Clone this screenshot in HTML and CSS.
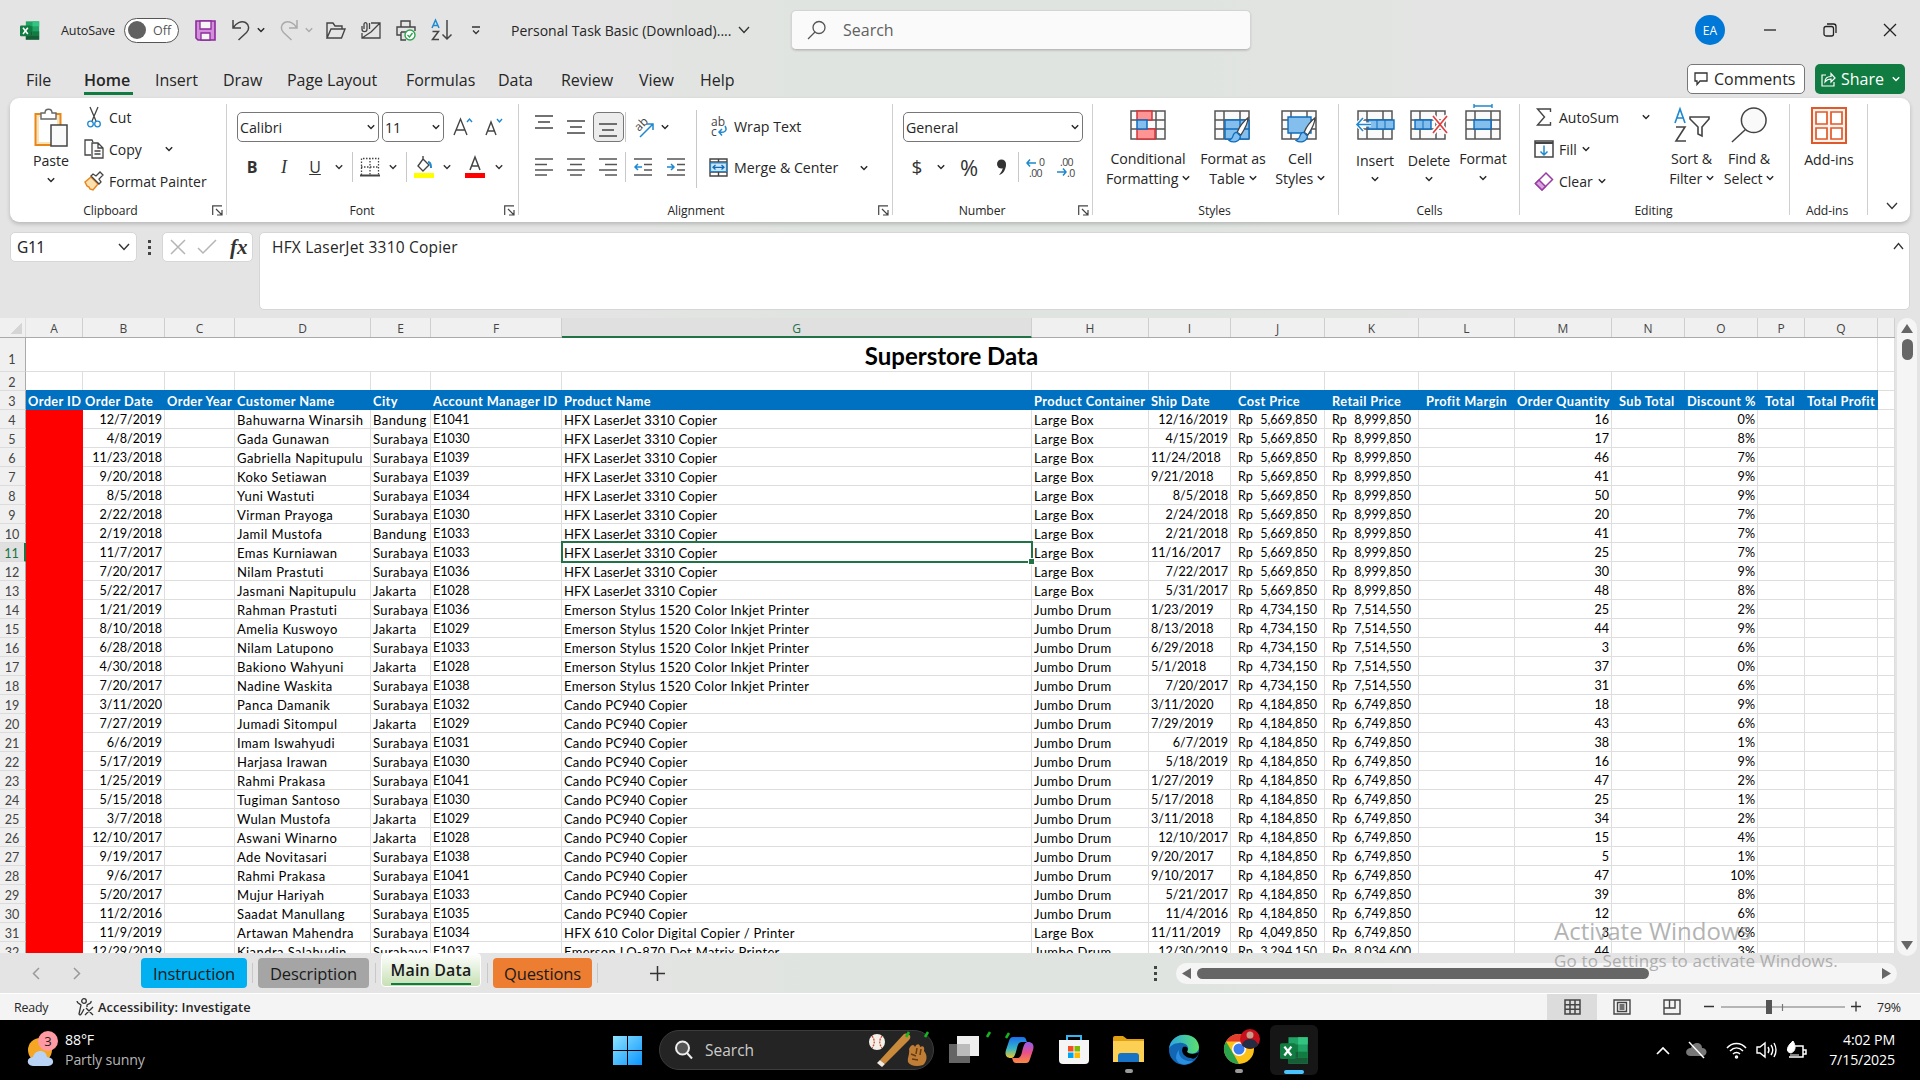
FILE: index.html
```html
<!DOCTYPE html>
<html lang="en">
<head>
<meta charset="utf-8">
<title>Personal Task Basic (Download) - Excel</title>
<link rel="stylesheet" href="styles.css">
</head>
<body>
<svg class="defs" width="0" height="0">
  <symbol id="chev" viewBox="0 0 8 6"><path d="M.8 1.2 4 4.5 7.2 1.2" fill="none" stroke="currentColor" stroke-width="1.4"/></symbol>
  <symbol id="launch" viewBox="0 0 11 11"><path d="M.7 10V.8H10M4 4l6 6M10 5v5H5" fill="none" stroke="#444" stroke-width="1.2"/></symbol>
  <symbol id="excel" viewBox="0 0 24 24"><path d="M7 1h16v22H7z" fill="#21a366"/><path d="M15 1h8v6h-8z" fill="#33c481"/><path d="M7 7h8v6H7z" fill="#107c41"/><path d="M7 13h8v5H7z" fill="#185c37"/><path d="M15 13h8v5h-8z" fill="#107c41"/><path d="M7 18h16v5H7z" fill="#185c37"/><rect y="6" width="13" height="13" rx="1.3" fill="#107c41"/><path d="m3.6 8.8 5.8 7.4m0-7.4-5.8 7.4" stroke="#fff" stroke-width="1.9"/></symbol>
  <symbol id="gridicon" viewBox="0 0 36 30"><path d="M1 1h34v28H1zM1 10h34M1 19h34M10 1v28M26 1v28" fill="#fafafa" stroke="#555" stroke-width="1.5"/></symbol>
  <symbol id="brush" viewBox="0 0 24 32"><path d="M22 2c-5 4-10 11-12 16l4 3c4-6 8-13 8-19z" fill="#fff" stroke="#444" stroke-width="1.4"/><path d="M9.500 18c-3 0-4 3-4.500 5-.5 2-2 3-4 4 4 3 12 2 12.500-5z" fill="#83beec" stroke="#0f6cbd" stroke-width="1.4"/></symbol>
</svg>

<header class="titlebar">
  <svg width="20" height="21"><use href="#excel"/></svg>
  <span class="autosave">AutoSave</span>
  <span class="toggle"><i></i>Off</span>
  <svg width="21" height="21" viewBox="0 0 21 21"><path d="M1 1h19v19H3l-2-2z" fill="#d48fdc" stroke="#8a2b9a" stroke-width="1.6"/><path d="M5 1h11v8H5z" fill="#f6f6f6" stroke="#8a2b9a" stroke-width="1.3"/><path d="M6 13h9v7H6z" fill="#f6f6f6" stroke="#8a2b9a" stroke-width="1.3"/></svg>
  <svg width="20" height="21" viewBox="0 0 20 21" fill="none" stroke="#444" stroke-width="1.5"><path d="M2 0v8h8M2 8C5 3 10 .5 14.500 2.500c4 2.500 4 7 1 10L7.500 20"/></svg>
  <svg width="8" height="6"><use href="#chev"/></svg>
  <svg class="faded" width="20" height="21" viewBox="0 0 20 21" fill="none" stroke="#aaa" stroke-width="1.5"><path d="M18 0v8h-8M18 8C15 3 10 .5 5.500 2.500c-4 2.500-4 7-1 10L12.500 20"/></svg>
  <svg class="faded" width="8" height="6"><use href="#chev"/></svg>
  <svg width="20" height="17" viewBox="0 0 20 17" fill="none" stroke="#444" stroke-width="1.4"><path d="M1 16V1h6l2 3h7v3M1 16 5 7h14l-3.500 9z"/></svg>
  <svg width="20" height="17" viewBox="0 0 20 17" fill="none" stroke="#444" stroke-width="1.300"><path d="M10 1h9v15H1v-5M10 10l9-9M1 16l9-6M1 4v3c0 3.500 5 3.500 5 0V2.500c0-2.500-3-2.500-3 0V7M8.500 1v6"/></svg>
  <svg width="20" height="21" viewBox="0 0 20 21" fill="none" stroke="#444" stroke-width="1.400"><path d="M5 7V1h9v6M5 15H1V7h18v4M5 12v8h5M5 12h6"/><circle cx="14" cy="15" r="5" fill="#fff" stroke="#2da44e"/><path d="m11.500 15 2 2 3-4" stroke="#2da44e"/></svg>
  <svg width="21" height="22" viewBox="0 0 21 22" fill="none" stroke-width="1.500"><path d="m1 9 3.500-8L8 9M2 6.500h5" stroke="#1e88d0"/><path d="M1.500 12.500h6l-6 8h6.500M16 1v19m-4.500-4.500L16 20l4.500-4.500" stroke="#444"/></svg>
  <svg width="10" height="9" viewBox="0 0 10 9" fill="none" stroke="#333" stroke-width="1.300"><path d="M1 1h8M2 4.500l3 3 3-3"/></svg>
  <span class="docname">Personal Task Basic (Download)....</span>
  <svg width="12" height="8" viewBox="0 0 12 8"><path d="m1 1 5 5.500L11 1" fill="none" stroke="#333" stroke-width="1.300"/></svg>
  <div class="search"><svg width="20" height="20" viewBox="0 0 20 20" fill="none" stroke="#555" stroke-width="1.300"><circle cx="12" cy="7.500" r="6"/><path d="m8 12-7 7"/></svg><span>Search</span></div>
  <span class="avatar">EA</span>
  <svg width="14" height="14" viewBox="0 0 14 14"><path d="M1 7h12" stroke="#222" stroke-width="1.300"/></svg>
  <svg width="14" height="14" viewBox="0 0 14 14" fill="none" stroke="#222" stroke-width="1.300"><rect x="1" y="3.500" width="9.500" height="9.500" rx="2"/><path d="M4 1h6.500Q13 1 13 3.500V10"/></svg>
  <svg width="14" height="14" viewBox="0 0 14 14"><path d="m1 1 12 12M13 1 1 13" stroke="#222" stroke-width="1.300"/></svg>
</header>

<nav class="menubar">
  <span>File</span><span class="active">Home</span><span>Insert</span><span>Draw</span><span>Page Layout</span><span>Formulas</span><span>Data</span><span>Review</span><span>View</span><span>Help</span>
  <div class="btn comments"><svg width="14" height="14" viewBox="0 0 14 14"><path d="M1 1h12v8H6l-3 3.500V9H1z" fill="none" stroke="#333" stroke-width="1.300"/></svg>Comments</div>
  <div class="btn share"><svg width="15" height="15" viewBox="0 0 15 15"><path d="M5 3H1v11h12v-4M4 10c0-4 3-5.500 6-5.500V1.500L14 6l-4 4V7C7 7 5.500 8 4 10z" fill="none" stroke="#fff" stroke-width="1.200"/></svg><span>Share</span><svg width="8" height="6"><use href="#chev"/></svg></div>
</nav>

<section class="ribbon">
  <div class="group g-clip">
    <div class="body">
      <div class="big paste"><svg width="35" height="40" viewBox="0 0 35 40"><path d="M1.500 6h25v31h-25z" fill="#fbe3b8" stroke="#e8861a" stroke-width="2"/><path d="M5 9h18v25H5z" fill="#fff"/><path d="M7 5h4c0-5 7-5 7 0h4v6H7z" fill="#fff" stroke="#666" stroke-width="1.400"/><path d="M17 17h16v21H17z" fill="#fafafa" stroke="#444" stroke-width="1.500"/></svg><span>Paste</span><svg width="8" height="6"><use href="#chev"/></svg></div>
      <div class="stack">
        <div><svg width="16" height="21" viewBox="0 0 16 21" fill="none" stroke="#444" stroke-width="1.300"><path d="M4 0l6 14M12 0 6 14"/><circle cx="4.500" cy="17" r="2.800" stroke="#1e88d0"/><circle cx="11.500" cy="17" r="2.800" stroke="#1e88d0"/></svg><span>Cut</span></div>
        <div><svg width="20" height="20" viewBox="0 0 20 20" fill="#fff" stroke="#444" stroke-width="1.300"><path d="M7 16H1V1h7l1 2"/><path d="M8 4h6l5 5v10H8zM14 4v5h5M10.500 12h6M10.500 15h6" fill="#fafafa"/></svg><span>Copy</span><svg class="gap" width="8" height="6"><use href="#chev"/></svg></div>
        <div><svg width="20" height="20" viewBox="0 0 20 20"><path d="m1 11 6-5 7 7-5 6-3-1-1-2-2-1z" fill="#fce0b0" stroke="#e8861a" stroke-width="1.500"/><path d="m7 5 2-2 3 2 4-4 3 3-4 4 2 3-2 2z" fill="#fff" stroke="#444" stroke-width="1.300"/></svg><span>Format Painter</span></div>
      </div>
    </div>
    <div class="label"><span>Clipboard</span><svg width="11" height="11"><use href="#launch"/></svg></div>
  </div>

  <div class="group g-font">
    <div class="body rows">
      <div class="r1"><div class="combo"><span>Calibri</span><svg width="8" height="6"><use href="#chev"/></svg></div><div class="combo"><span>11</span><svg width="8" height="6"><use href="#chev"/></svg></div>
        <svg width="20" height="20" viewBox="0 0 20 20" fill="none" stroke-width="1.400"><path d="M1 18 7.500 2 14 18M3 13h9" stroke="#444"/><path d="m14 5 2.500-3L19 5" stroke="#1e88d0"/></svg>
        <svg width="18" height="20" viewBox="0 0 18 20" fill="none" stroke-width="1.400"><path d="M1 18 6 5l5 13M2.500 14h7" stroke="#444"/><path d="m12 2 2.500 3L17 2" stroke="#1e88d0"/></svg></div>
      <div class="r2"><b>B</b><i>I</i><u>U</u><svg width="8" height="6"><use href="#chev"/></svg><hr>
        <svg width="20" height="20" viewBox="0 0 20 20" fill="none" stroke="#444"><path d="M1.500 18V1.500h17V18M10 1v17M1 10h18" stroke-dasharray="1.500 1.500" stroke-width="1.300"/><path d="M0 18.500h20" stroke-width="2"/></svg><svg width="8" height="6"><use href="#chev"/></svg><hr>
        <svg width="20" height="22" viewBox="0 0 20 22"><path d="m9 3 6 6-6 6-5-5zM9 3V0" fill="none" stroke="#444" stroke-width="1.400"/><path d="M14 6c3 0 3 3 3 6" fill="none" stroke="#1e88d0" stroke-width="2"/><path d="M0 17h20v5H0z" fill="#ff0"/></svg><svg width="8" height="6"><use href="#chev"/></svg>
        <svg width="20" height="22" viewBox="0 0 20 22"><path d="M5 14 10 1l5 13M6.500 10h7" fill="none" stroke="#444" stroke-width="1.500"/><path d="M0 17h20v5H0z" fill="red"/></svg><svg width="8" height="6"><use href="#chev"/></svg></div>
    </div>
    <div class="label"><span>Font</span><svg width="11" height="11"><use href="#launch"/></svg></div>
  </div>

  <div class="group g-align">
    <div class="body">
      <div class="rows">
      <div class="r1">
        <svg class="up" width="18" height="16" viewBox="0 0 18 16"><path d="M0 2h18M3 8h12M0 14h18" stroke="#444" stroke-width="1.500"/></svg>
        <svg width="18" height="16" viewBox="0 0 18 16"><path d="M0 2h18M3 8h12M0 14h18" stroke="#444" stroke-width="1.500"/></svg>
        <span class="pressed"><svg width="18" height="16" viewBox="0 0 18 16"><path d="M0 2h18M3 8h12M0 14h18" stroke="#444" stroke-width="1.500"/></svg></span><hr>
        <svg width="21" height="21" viewBox="0 0 21 21"><text class="abtext" transform="translate(6 15) rotate(-45)">ab</text><path d="M7 20 20 7m-6 0h6v6" fill="none" stroke="#1e88d0" stroke-width="1.500"/></svg><svg width="8" height="6"><use href="#chev"/></svg></div>
      <div class="r2">
        <svg width="18" height="18" viewBox="0 0 18 18"><path d="M0 1h18M0 6.500h12M0 12h18M0 17h12" stroke="#555" stroke-width="1.500"/></svg>
        <svg width="18" height="18" viewBox="0 0 18 18"><path d="M0 1h18M3 6.500h12M0 12h18M3 17h12" stroke="#555" stroke-width="1.500"/></svg>
        <svg width="18" height="18" viewBox="0 0 18 18"><path d="M0 1h18M6 6.500h12M0 12h18M6 17h12" stroke="#555" stroke-width="1.500"/></svg><hr>
        <svg width="18" height="18" viewBox="0 0 18 18" fill="none"><path d="M0 1h18M10 6.500h8M10 12h8M0 17h18" stroke="#555" stroke-width="1.500"/><path d="M8 9H1m3-3L1 9l3 3" stroke="#1e88d0" stroke-width="1.500"/></svg>
        <svg width="18" height="18" viewBox="0 0 18 18" fill="none"><path d="M0 1h18M10 6.500h8M10 12h8M0 17h18" stroke="#555" stroke-width="1.500"/><path d="M0 9h7M4 6l3 3-3 3" stroke="#1e88d0" stroke-width="1.500"/></svg></div>
      </div>
      <div class="wrapmerge">
        <div><svg width="19" height="20" viewBox="0 0 19 20"><text class="abtext" x="2" y="9">ab</text><text class="abtext" x="2" y="19">c</text><path d="M16 9c3 5-1 7-6 6m3-3-3 3 3 3.500" fill="none" stroke="#1e88d0" stroke-width="1.500"/></svg><span>Wrap Text</span></div>
        <div><svg width="19" height="19" viewBox="0 0 19 19"><path d="M1 1h17v17H1zM1 4h17M1 14h17M9.500 1v3M9.500 14v4" fill="#fff" stroke="#444" stroke-width="1.400"/><path d="M1.500 5h16v8.500h-16z" fill="#cfe6f8" stroke="#1e88d0" stroke-width="1.200"/><path d="M4 9.300h11M6.500 7 4 9.300l2.500 2.300M12.500 7 15 9.300l-2.500 2.300" fill="none" stroke="#0f6cbd" stroke-width="1.300"/></svg><span>Merge &amp; Center</span><svg class="gap" width="8" height="6"><use href="#chev"/></svg></div>
      </div>
    </div>
    <div class="label"><span>Alignment</span><svg width="11" height="11"><use href="#launch"/></svg></div>
  </div>

  <div class="group g-num">
    <div class="body rows">
      <div class="r1"><div class="combo"><span>General</span><svg width="8" height="6"><use href="#chev"/></svg></div></div>
      <div class="r2"><span class="sym">$</span><svg width="8" height="6"><use href="#chev"/></svg><span class="sym pct">%</span>
        <svg width="11" height="17" viewBox="0 0 11 17"><circle cx="5.500" cy="5" r="4.500" fill="#333"/><path d="M10 5c0 6-3 10-7 11 2-3 4-5 4-9z" fill="#333"/></svg><hr>
        <svg width="20" height="20" viewBox="0 0 20 20"><path d="M10 6H1m3-3.500L1 6l3 3.500" fill="none" stroke="#1e88d0" stroke-width="1.500"/><text class="dec" x="13" y="9">0</text><text class="dec" x="3" y="19.500">.00</text></svg>
        <svg width="20" height="20" viewBox="0 0 20 20"><path d="M0 15h9M6 11.500 9 15l-3 3.500" fill="none" stroke="#1e88d0" stroke-width="1.500"/><text class="dec" x="3" y="9">.00</text><text class="dec" x="10" y="19.500">.0</text></svg></div>
    </div>
    <div class="label"><span>Number</span><svg width="11" height="11"><use href="#launch"/></svg></div>
  </div>

  <div class="group g-styles">
    <div class="body bigs">
      <div class="big"><svg width="38" height="36" viewBox="0 0 38 36"><use href="#gridicon" x="1" y="3" width="36" height="30"/><path d="M8 4h15v9H8zM8 22h18v10H8z" fill="#ff9494" stroke="#d13438" stroke-width="1.500"/><path d="M8 13h10v9H8z" fill="#83beec" stroke="#0f6cbd" stroke-width="1.500"/></svg><span>Conditional<br>Formatting <svg width="8" height="6"><use href="#chev"/></svg></span></div>
      <div class="big"><svg width="38" height="36" viewBox="0 0 38 36"><use href="#gridicon" x="0" y="3" width="36" height="30"/><path d="M11 13h24v19H11z" fill="#83beec"/><path d="M11 13h24M11 22h24M11 13v19M26 13v19M35 13v19M11 32h24" stroke="#0f6cbd" stroke-width="1.400"/><use href="#brush" x="13" y="9" width="24" height="29"/></svg><span>Format as<br>Table <svg width="8" height="6"><use href="#chev"/></svg></span></div>
      <div class="big"><svg width="38" height="36" viewBox="0 0 38 36"><use href="#gridicon" x="0" y="3" width="36" height="30"/><path d="M7 10h23v16H7z" fill="#83beec" stroke="#0f6cbd" stroke-width="1.400"/><use href="#brush" x="13" y="9" width="24" height="29"/></svg><span>Cell<br>Styles <svg width="8" height="6"><use href="#chev"/></svg></span></div>
    </div>
    <div class="label"><span>Styles</span></div>
  </div>

  <div class="group g-cells">
    <div class="body bigs">
      <div class="big"><svg width="40" height="36" viewBox="0 0 40 36"><use href="#gridicon" x="2" y="3" width="36" height="30"/><path d="M13 13h26v9H13z" fill="#83beec" stroke="#0f6cbd" stroke-width="1.400"/><path d="M22 13v9M30 13v9" stroke="#0f6cbd"/><path d="M16 17.500H2m6-6.500-6 6.500 6 6.500" fill="none" stroke="#fff" stroke-width="4"/><path d="M16 17.500H2m6-6.500-6 6.500 6 6.500" fill="none" stroke="#1e88d0" stroke-width="1.600"/></svg><span>Insert</span><svg width="8" height="6"><use href="#chev"/></svg></div>
      <div class="big"><svg width="40" height="36" viewBox="0 0 40 36"><use href="#gridicon" x="1" y="3" width="36" height="30"/><path d="M6 13h16v9H6z" fill="#83beec" stroke="#0f6cbd" stroke-width="1.400"/><path d="M14 13v9" stroke="#0f6cbd"/><path d="m24 9 14 17M38 9 24 26" stroke="#fff" stroke-width="5"/><path d="m24 9 14 17M38 9 24 26" stroke="#e03e3e" stroke-width="1.700"/></svg><span>Delete</span><svg width="8" height="6"><use href="#chev"/></svg></div>
      <div class="big fmt"><svg width="40" height="38" viewBox="0 0 40 38"><use href="#gridicon" x="2" y="6" width="36" height="30"/><path d="M11 16h17v9H11z" fill="#83beec" stroke="#0f6cbd" stroke-width="1.400"/><path d="M11 2h18M11 0v4M29 0v4" stroke="#1e88d0" stroke-width="1.400"/></svg><span>Format</span><svg width="8" height="6"><use href="#chev"/></svg></div>
    </div>
    <div class="label"><span>Cells</span></div>
  </div>

  <div class="group g-edit">
    <div class="body">
      <div class="stack">
        <div><svg width="17" height="18" viewBox="0 0 17 18"><path d="M15 4V1H2l7 8-7 8h13v-3" fill="none" stroke="#444" stroke-width="1.400"/></svg><span>AutoSum</span><svg class="gap" width="8" height="6"><use href="#chev"/></svg></div>
        <div><svg width="20" height="18" viewBox="0 0 20 18"><path d="M1 1h18v16H1z" fill="#fff" stroke="#444" stroke-width="1.500"/><path d="M1 3h18" stroke="#444" stroke-width="2"/><path d="M10 5.500V15M6.500 11.500 10 15l3.500-3.500" fill="none" stroke="#1e88d0" stroke-width="1.500"/></svg><span>Fill</span><svg class="near" width="8" height="6"><use href="#chev"/></svg></div>
        <div><svg width="20" height="19" viewBox="0 0 20 19"><path d="m12 1 6.500 6.500L8 18l-6.500-6.500z" fill="#fff" stroke="#9b3aa6" stroke-width="1.500"/><path d="m5 8 6.500 6.500L8 18l-6.500-6.500z" fill="#d9a3df" stroke="#9b3aa6" stroke-width="1.500"/></svg><span>Clear</span><svg class="near" width="8" height="6"><use href="#chev"/></svg></div>
      </div>
      <div class="big"><svg width="36" height="36" viewBox="0 0 36 36" fill="none" stroke-width="1.600"><path d="m1 16 5-14 5 14M3 11h7" stroke="#1e88d0"/><path d="M2 20h9L2 34h10M16 10h19v2l-7 8v9l-4-2v-7l-8-8z" stroke="#444"/></svg><span>Sort &amp;<br>Filter <svg width="8" height="6"><use href="#chev"/></svg></span></div>
      <div class="big"><svg width="38" height="38" viewBox="0 0 38 38" fill="#fafafa" stroke="#444" stroke-width="1.600"><circle cx="24" cy="14" r="13"/><path d="M15 24 1 37"/></svg><span>Find &amp;<br>Select <svg width="8" height="6"><use href="#chev"/></svg></span></div>
    </div>
    <div class="label"><span>Editing</span></div>
  </div>

  <div class="group g-add">
    <div class="body bigs"><div class="big"><svg width="36" height="37" viewBox="0 0 36 37"><path d="M1 1h34v35H1z" fill="#fdf3ee" stroke="#e0592a" stroke-width="2"/><path d="M5 5h11v12H5zM20 5h11v12H20zM5 21h11v11H5zM20 21h11v11H20z" fill="#fff" stroke="#e0592a" stroke-width="1.700"/></svg><span>Add-ins</span></div></div>
    <div class="label"><span>Add-ins</span></div>
  </div>
  <div class="collapse"><svg width="12" height="8" viewBox="0 0 12 8"><path d="m1 1 5 5.500L11 1" fill="none" stroke="#333" stroke-width="1.300"/></svg></div>
</section>

<section class="formula">
  <div class="namebox"><span>G11</span><svg width="12" height="8" viewBox="0 0 12 8"><path d="m1 1 5 5.500L11 1" fill="none" stroke="#333" stroke-width="1.400"/></svg></div>
  <div class="dots"><i></i><i></i><i></i></div>
  <div class="fx"><svg width="16" height="16" viewBox="0 0 16 16"><path d="m1 1 14 14M15 1 1 15" stroke="#b5b5b5" stroke-width="1.500"/></svg><svg width="20" height="16" viewBox="0 0 20 16"><path d="m1 9 5 5L19 1" fill="none" stroke="#b5b5b5" stroke-width="1.500"/></svg><em>fx</em></div>
  <div class="input"><span>HFX LaserJet 3310 Copier</span><svg width="11" height="8" viewBox="0 0 11 8"><path d="m1 7 4.500-5.500L10 7" fill="none" stroke="#333" stroke-width="1.300"/></svg></div>
</section>

<main class="workspace">
  <div class="sheet" id="sheet"></div>
  <div class="vscroll"><svg width="12" height="9" viewBox="0 0 12 9"><path d="M6 0 12 9H0z" fill="#666"/></svg><i></i><svg width="12" height="9" viewBox="0 0 12 9"><path d="M0 0h12L6 9z" fill="#666"/></svg></div>
</main>

<section class="tabs">
  <svg width="8" height="13" viewBox="0 0 8 13"><path d="M7 1 1.500 6.500 7 12" fill="none" stroke="#999" stroke-width="1.500"/></svg>
  <svg width="8" height="13" viewBox="0 0 8 13"><path d="m1 1 5.500 5.500L1 12" fill="none" stroke="#999" stroke-width="1.500"/></svg>
  <span class="tab blue">Instruction</span><hr><span class="tab gray">Description</span><hr><span class="tab current"><b>Main Data</b></span><hr><span class="tab orange">Questions</span><hr>
  <svg width="15" height="15" viewBox="0 0 15 15"><path d="M7.500 0v15M0 7.500h15" stroke="#333" stroke-width="1.500"/></svg>
  <div class="dots"><i></i><i></i><i></i></div>
  <div class="hscroll"><svg width="9" height="11" viewBox="0 0 9 11"><path d="M9 0v11L0 5.500z" fill="#666"/></svg><i></i><svg width="9" height="11" viewBox="0 0 9 11"><path d="M0 0v11l9-5.500z" fill="#666"/></svg></div>
</section>

<footer class="status">
  <span>Ready</span>
  <svg width="19" height="18" viewBox="0 0 19 18" fill="none" stroke="#333" stroke-width="1.300"><circle cx="8" cy="3" r="2.300"/><path d="M1 3c0 3 4 3 4 4l-2 9c1 2 2 1 5-5M15 3c1 3-4 3-4 4v2M9 17l8-8M10 10l7 7"/></svg>
  <b>Accessibility: Investigate</b>
  <span class="view on"><svg width="17" height="16" viewBox="0 0 17 16"><path d="M1 1h15v14H1zM1 5.700h15M1 10.300h15M6 1v14M11 1v14" fill="none" stroke="#444" stroke-width="1.500"/></svg></span>
  <span class="view"><svg width="18" height="16" viewBox="0 0 18 16"><path d="M1 1h16v14H1zM4.500 3.500h9v9h-9zM6.500 6h5M6.500 8h5M6.500 10h5" fill="none" stroke="#444" stroke-width="1.400"/></svg></span>
  <span class="view"><svg width="18" height="16" viewBox="0 0 18 16"><path d="M1 1h16v14H1zM1 9h11V1M6.500 1v8" fill="none" stroke="#444" stroke-width="1.400"/></svg></span>
  <svg width="158" height="16" viewBox="0 0 158 16"><path d="M0 7.500h10M147 7.500h10M152 2.500v10" stroke="#333" stroke-width="1.300"/><path d="M17 8h124M78.500 5v7" stroke="#777" stroke-width="1.200"/><path d="M62 1h6v14h-6z" fill="#555"/></svg>
  <span class="zoom">79%</span>
</footer>

<footer class="taskbar">
  <svg width="34" height="42" viewBox="0 0 34 42"><circle cx="14" cy="21" r="12" fill="#f5a623"/><path d="M7 37c-7 0-7-9 0-9 2-8 13-8 14 0 8 0 8 9 1 9z" fill="#b9d3f7"/><circle cx="22" cy="12" r="10" fill="#ff99a4"/><text class="badge" x="22" y="17">3</text></svg>
  <div class="weather"><span>88°F</span><span class="dim">Partly sunny</span></div>
  <svg width="29" height="29" viewBox="0 0 29 29"><linearGradient id="win" x2="1" y2="1"><stop stop-color="#8fe3ff"/><stop offset="1" stop-color="#0a95ff"/></linearGradient><path d="M0 0h14v14H0zM15 0h14v14H15zM0 15h14v14H0zM15 15h14v14H15z" fill="url(#win)"/></svg>
  <div class="tsearch"><svg width="20" height="20" viewBox="0 0 20 20" fill="#555" stroke="#eee" stroke-width="2"><circle cx="8.500" cy="8" r="6.500"/><path d="m13 13 5 5.500"/></svg><span>Search</span>
    <svg width="60" height="36" viewBox="0 0 60 36"><circle cx="9" cy="10" r="8" fill="#f4f1ea"/><path d="M4 4c3 4 3 8 0 12M14 4c-3 4-3 8 0 12" fill="none" stroke="#d24b34" stroke-width="1.300" stroke-dasharray="2 1"/><path d="M12 28 35 3c4-4 10 1 6 5L17 32z" fill="#c98a3c"/><path d="m12 28 5 4-3 3-5-4z" fill="#f3e9dc"/><path d="M41 17c2-5 5-5 6-2 2-4 5-3 5 0 3-2 5 0 4 4 4 4 3 11-1 14-6 2-13 1-15-3-1-4 2-8 1-13z" fill="#c07d35"/><path d="M43 22l5 2M44 27l6 1M49 16l-1 6M53 17l-1 6" stroke="#633a12" stroke-width="1.500"/><path d="m38 5 3-5M57 5l3-5" stroke="#17b51f" stroke-width="2.500"/></svg></div>
  <svg width="30" height="30" viewBox="0 0 30 30"><path d="M8 1h22v20H8z" fill="#eee"/><path d="M0 9h21v19H0z" fill="#777" opacity=".85"/><path d="M8 9h13v12H8z" fill="#bbb"/><path d="m38 2 3-5" stroke="#17b51f" stroke-width="2.500"/></svg>
  <svg width="29" height="28" viewBox="0 0 29 28"><linearGradient id="cp1" x2="0" y2="1"><stop stop-color="#1b6ff0"/><stop offset=".55" stop-color="#35b5c8"/><stop offset="1" stop-color="#f0c62c"/></linearGradient><linearGradient id="cp2" x2="0" y2="1"><stop stop-color="#8f5cf0"/><stop offset=".5" stop-color="#e94f8a"/><stop offset="1" stop-color="#fb8a3c"/></linearGradient><path d="M8 1h10c3 0 3 3 4 5h-5c-3 0-4 2-5 6-2 8-3 10-6 10C0 22 0 17 1 14L4 5c1-3 2-4 4-4z" fill="url(#cp1)"/><path d="M21 27H11c-3 0-3-3-4-5h5c3 0 4-2 5-6 2-8 3-10 6-10 6 0 6 5 5 8l-3 9c-1 3-2 4-4 4z" fill="url(#cp2)"/><path d="m1 2 3-5" stroke="#17b51f" stroke-width="2.500"/></svg>
  <svg width="30" height="30" viewBox="0 0 30 30"><path d="M8 6V1h14v5" fill="none" stroke="#35b4f0" stroke-width="2"/><path d="M0 5h30v20q0 4-4 4H4q-4 0-4-4z" fill="#f5f5f5"/><path d="M9 11h5.500v5.500H9z" fill="#f25022"/><path d="M15.500 11H21v5.500h-5.500z" fill="#7fba00"/><path d="M9 17.500h5.500V23H9z" fill="#00a4ef"/><path d="M15.500 17.500H21V23h-5.500z" fill="#ffb900"/></svg>
  <svg width="31" height="48" viewBox="0 0 31 48"><path d="M0 12q0-2 2-2h8l4 3h17v23H0z" fill="#e0a013"/><path d="M0 15h31v21H0z" fill="#fcd053"/><path d="M5 36v-6q0-3 3-3h15q3 0 3 3v6z" fill="#1673c5"/><rect x="12" y="43" width="8" height="4" rx="2" fill="#999"/></svg>
  <svg width="30" height="30" viewBox="0 0 30 30"><linearGradient id="edge" x2="1"><stop stop-color="#2aa7e5"/><stop offset="1" stop-color="#5be06b"/></linearGradient><circle cx="15" cy="15" r="15" fill="#1267b5"/><path d="M0 14C2-5 29-4 30 12c0 7-9 8-12 5 4-6-3-10-8-9-5 0-9 3-10 6z" fill="url(#edge)"/><path d="M18 17c3 3 9 2 12 0-1 5-5 8-8 6-6 0-11-6-8-11 4-1 6 1 4 5z" fill="#000"/><path d="M10 15c-1 7 5 12 14 11-6 5-15 5-17-3 0-3 1-6 3-8z" fill="#2b8ee0"/></svg>
  <svg width="37" height="48" viewBox="0 0 37 48"><circle cx="15" cy="23" r="15" fill="#fbc116"/><path d="M2 15.500A15 15 0 0 1 28 15.500H15z" fill="#e33b2e"/><path d="M2 15.500 9.500 28 15 38A15 15 0 0 1 2 15.500z" fill="#2ba24c"/><circle cx="15" cy="23" r="7" fill="#fff"/><circle cx="15" cy="23" r="5.500" fill="#3b7ded"/><circle cx="26" cy="13" r="10" fill="#c8101c"/><circle cx="26" cy="9" r="3.500" fill="#c99a86"/><path d="M18 19c2-8 14-8 16 0-4 5-12 5-16 0z" fill="#232c42"/><rect x="11" y="43" width="8" height="4" rx="2" fill="#999"/></svg>
  <div class="running"><svg width="29" height="29"><use href="#excel"/></svg><i></i></div>
  <svg width="14" height="9" viewBox="0 0 14 9"><path d="m1 8 6-6 6 6" fill="none" stroke="#fff" stroke-width="1.700"/></svg>
  <svg width="21" height="18" viewBox="0 0 21 18"><path d="M5 15c-7 0-6-8 0-8 2-7 11-6 11 0 6 0 6 8 0 8z" fill="#777"/><path d="m3 1 15 16" stroke="#fff" stroke-width="1.500"/></svg>
  <svg width="21" height="17" viewBox="0 0 21 17" fill="none" stroke="#fff" stroke-width="1.500"><path d="M1 6c5-6 14-6 19 0M4 9c4-4 9-4 13 0M7 12c2-2 5-2 7 0"/><circle cx="10.500" cy="15" r="1"/></svg>
  <svg width="21" height="18" viewBox="0 0 21 18" fill="none" stroke="#fff" stroke-width="1.400"><path d="M1 6h3l5-4v14l-5-4H1zM12 6q2 3 0 6M15 4q3.500 5 0 10M18 2q4 7 0 14"/></svg>
  <svg width="21" height="18" viewBox="0 0 21 18"><path d="M9 5h8v11H3M17 9h3v4h-3" fill="none" stroke="#fff" stroke-width="1.500"/><path d="M7 0c3 5 3 10-2 12C-1 11 1 5 7 0zM4 14h9" fill="#fff" stroke="#fff"/></svg>
  <div class="clock"><span>4:02 PM</span><span>7/15/2025</span></div>
</footer>

<div class="activate"><p>Activate Windows</p><small>Go to Settings to activate Windows.</small></div>
<script src="sheet.js"></script>
</body>
</html>
```
FILE: sheet.js
```js
const HEADERS = ['Order ID','Order Date','Order Year','Customer Name','City','Account Manager ID','Product Name','Product Container','Ship Date','Cost Price','Retail Price','Profit Margin','Order Quantity','Sub Total','Discount %','Total','Total Profit'];
const HFX = 'HFX LaserJet 3310 Copier|Large Box';
const EMS = 'Emerson Stylus 1520 Color Inkjet Printer|Jumbo Drum';
const CAN = 'Cando PC940 Copier|Jumbo Drum';
const P1 = '5,669,850|8,999,850', P2 = '4,734,150|7,514,550', P3 = '4,184,850|6,749,850';
// A "<" before the ship date marks a date stored as text (left aligned).
const ROWS = [
`12/7/2019|Bahuwarna Winarsih|Bandung|E1041|${HFX}|12/16/2019|${P1}|16|0%`,
`4/8/2019|Gada Gunawan|Surabaya|E1030|${HFX}|4/15/2019|${P1}|17|8%`,
`11/23/2018|Gabriella Napitupulu|Surabaya|E1039|${HFX}|<11/24/2018|${P1}|46|7%`,
`9/20/2018|Koko Setiawan|Surabaya|E1039|${HFX}|<9/21/2018|${P1}|41|9%`,
`8/5/2018|Yuni Wastuti|Surabaya|E1034|${HFX}|8/5/2018|${P1}|50|9%`,
`2/22/2018|Virman Prayoga|Surabaya|E1030|${HFX}|2/24/2018|${P1}|20|7%`,
`2/19/2018|Jamil Mustofa|Bandung|E1033|${HFX}|2/21/2018|${P1}|41|7%`,
`11/7/2017|Emas Kurniawan|Surabaya|E1033|${HFX}|<11/16/2017|${P1}|25|7%`,
`7/20/2017|Nilam Prastuti|Surabaya|E1036|${HFX}|7/22/2017|${P1}|30|9%`,
`5/22/2017|Jasmani Napitupulu|Jakarta|E1028|${HFX}|5/31/2017|${P1}|48|8%`,
`1/21/2019|Rahman Prastuti|Surabaya|E1036|${EMS}|<1/23/2019|${P2}|25|2%`,
`8/10/2018|Amelia Kuswoyo|Jakarta|E1029|${EMS}|<8/13/2018|${P2}|44|9%`,
`6/28/2018|Nilam Latupono|Surabaya|E1033|${EMS}|<6/29/2018|${P2}|3|6%`,
`4/30/2018|Bakiono Wahyuni|Jakarta|E1028|${EMS}|<5/1/2018|${P2}|37|0%`,
`7/20/2017|Nadine Waskita|Surabaya|E1038|${EMS}|7/20/2017|${P2}|31|6%`,
`3/11/2020|Panca Damanik|Surabaya|E1032|${CAN}|<3/11/2020|${P3}|18|9%`,
`7/27/2019|Jumadi Sitompul|Jakarta|E1029|${CAN}|<7/29/2019|${P3}|43|6%`,
`6/6/2019|Imam Iswahyudi|Surabaya|E1031|${CAN}|6/7/2019|${P3}|38|1%`,
`5/17/2019|Harjasa Irawan|Surabaya|E1030|${CAN}|5/18/2019|${P3}|16|9%`,
`1/25/2019|Rahmi Prakasa|Surabaya|E1041|${CAN}|<1/27/2019|${P3}|47|2%`,
`5/15/2018|Tugiman Santoso|Surabaya|E1030|${CAN}|<5/17/2018|${P3}|25|1%`,
`3/7/2018|Wulan Mustofa|Jakarta|E1029|${CAN}|<3/11/2018|${P3}|34|2%`,
`12/10/2017|Aswani Winarno|Jakarta|E1028|${CAN}|12/10/2017|${P3}|15|4%`,
`9/19/2017|Ade Novitasari|Surabaya|E1038|${CAN}|<9/20/2017|${P3}|5|1%`,
`9/6/2017|Rahmi Prakasa|Surabaya|E1041|${CAN}|<9/10/2017|${P3}|47|10%`,
`5/20/2017|Mujur Hariyah|Surabaya|E1033|${CAN}|5/21/2017|${P3}|39|8%`,
`11/2/2016|Saadat Manullang|Surabaya|E1035|${CAN}|11/4/2016|${P3}|12|6%`,
`11/9/2019|Artawan Mahendra|Surabaya|E1034|HFX 610 Color Digital Copier / Printer|Large Box|<11/11/2019|4,049,850|6,749,850|3|6%`,
`12/29/2019|Kiandra Salahudin|Surabaya|E1037|Emerson LQ-870 Dot Matrix Printer|Jumbo Drum|12/30/2019|3,294,150|8,034,600|44|3%`
];
const cell = (text, cls) => `<div class="c ${cls || ''}"><span>${text || ''}</span></div>`;
const row = (cls, n, cells) => `<div class="row ${cls}"><div class="rh${n === 11 ? ' sel' : ''}">${n}</div>${cells}</div>`;
const money = v => cell(`<i>Rp</i><i>${v}</i>`, 'money');
let html = '<div class="row heads"><div class="corner"></div>' + [...'ABCDEFGHIJKLMNOPQ'].map(l => `<div class="ch${l === 'G' ? ' sel' : ''}">${l}</div>`).join('') + '<div class="ch"></div></div>';
html += row('title', 1, cell('Superstore Data', 'merged') + cell());
html += row('', 2, HEADERS.map(() => cell()).join('') + cell());
html += row('fields', 3, HEADERS.map((h, i) => cell(h, [9, 10, 11, 13, 15].includes(i) ? 'ind' : '')).join('') + cell());
ROWS.forEach((line, i) => {
  const [date, name, city, mgr, prod, box, ship, cost, retail, qty, disc] = line.split('|');
  const n = i + 4;
  html += row('', n, cell('', 'red') + cell(date, 'r') + cell() + cell(name, 'name') + cell(city, 'name') + cell(mgr)
    + cell(prod, 'prod' + (prod.length > 30 ? ' long' : '') + (n === 11 ? ' cursor' : '')) + cell(box, 'box')
    + (ship[0] === '<' ? cell(ship.slice(1)) : cell(ship, 'r')) + money(cost) + money(retail) + cell() + cell(qty, 'r') + cell() + cell(disc, 'r') + cell() + cell() + cell());
});
document.getElementById('sheet').innerHTML = html;
```
FILE: styles.css
```css
* { box-sizing: border-box; }
body { margin: 0; width: 1920px; height: 1080px; overflow: hidden; position: relative; background: linear-gradient(90deg, #e4e4e4 0 30%, #e0e4e0 42% 62%, #e4e4e4 80%); font-family: "Open Sans", "Noto Sans", sans-serif; font-size: 14px; color: #262626; }
svg { display: block; flex: none; overflow: visible; }
.defs { position: absolute; }
hr { margin: 0; border: 0; width: 1px; background: #c8c8c8; }
span { white-space: nowrap; }

/* Title bar */
.titlebar { height: 60px; display: grid; align-items: center; grid-template-columns: 41px 63px 71px 36px 26px 22px 26px 21px 35px 35px 35px 40px 40px 227px 53px 904px 68px 60px 60px 20px; padding-left: 20px; }
.autosave { font-size: 12.600px; letter-spacing: -.15px; }
.toggle { width: 55px; height: 25px; border: 1.500px solid #555; border-radius: 13px; background: #fff; display: flex; align-items: center; gap: 7px; padding-left: 3px; font-size: 12.500px; color: #555; }
.toggle i { width: 18px; height: 18px; border-radius: 50%; background: #616161; }
.faded { color: #aaa; }
.docname { font-size: 14px; letter-spacing: 0; }
.search { width: 460px; height: 40px; background: #fafafa; border: 1px solid #d4d4d4; border-bottom-color: #bbb; border-radius: 5px; display: flex; align-items: center; gap: 16px; padding-left: 15px; font-size: 16px; color: #616161; box-shadow: 0 1px 2px #0002; }
.avatar { width: 30px; height: 30px; border-radius: 50%; background: #0078d7; color: #fff; font-size: 12px; display: grid; place-items: center; }

/* Menu */
.menubar { height: 38px; display: grid; grid-template-columns: 58px 71px 68px 64px 119px 92px 63px 78px 61px 987px 128px 90px; padding: 3px 0 0 26px; align-items: start; font-size: 16px; }
.menubar > span { height: 32px; line-height: 34px; letter-spacing: -.05px; }
.menubar .active { font-weight: 600; width: 49px; border-bottom: 3px solid #107c41; letter-spacing: 0; }
.btn { height: 30px; display: flex; align-items: center; border-radius: 5px; gap: 6px; padding-left: 6px; margin-top: 1px; }
.comments { width: 118px; background: #fff; border: 1px solid #777; }
.share { width: 90px; background: #107c41; color: #fff; gap: 5px; }
.share span { width: 46px; }

/* Ribbon */
.ribbon { margin: 0 10px; height: 124px; background: #fff; border-radius: 9px; display: flex; box-shadow: 0 2px 4px #0003; }
.group { display: flex; flex-direction: column; background: linear-gradient(#cfcfcf, #cfcfcf) right 0 top 6px / 1px 111px no-repeat; }
.body { height: 102px; display: flex; }
.label { height: 20px; display: flex; justify-content: center; align-items: center; font-size: 12.200px; position: relative; letter-spacing: -.1px; }
.label svg { position: absolute; right: 4px; top: 5px; }
.g-clip { width: 217px; } .g-clip .label { padding-right: 16px; } .g-font .label { padding-right: 22px; }
.g-font { width: 292px; } .g-align { width: 374px; } .g-align .label { padding-right: 20px; }
.g-num { width: 200px; } .g-num .label { padding-right: 22px; }
.g-styles { width: 246px; } .g-cells { width: 181px; } .g-edit { width: 270px; } .g-add { width: 78px; }
.g-styles .label, .g-edit .label { padding-right: 3px; } .g-add .label { padding-right: 4px; }
.big { display: flex; flex-direction: column; align-items: center; text-align: center; font-size: 14.200px; line-height: 20px; letter-spacing: -.05px; }
.big span svg { display: inline-block; vertical-align: 3px; }
.paste { width: 62px; margin-left: 10px; padding-top: 10px; }
.paste > span { margin: 3px 0 6px; }
.stack { display: flex; flex-direction: column; padding-top: 3px; }
.stack > div { height: 32px; display: flex; align-items: center; gap: 5px; font-size: 14px; letter-spacing: 0; }
.g-clip .stack { margin-left: 2px; }
.g-clip .stack > div > svg:first-child { width: 20px; }
.g-clip .gap { margin-left: 18px; }
.rows { display: flex; flex-direction: column; }
.r1, .r2 { display: grid; align-items: center; justify-items: center; justify-content: start; }
.r1 { height: 30px; margin-top: 14px; } .r2 { height: 30px; margin-top: 10px; }
.r1 hr, .r2 hr { height: 30px; }
.combo { height: 30px; width: 100%; border: 1px solid #777; border-radius: 5px; display: flex; align-items: center; justify-content: space-between; padding: 0 3px 0 2px; font-size: 14.200px; background: #fff; }
.g-font .r1 { grid-template-columns: 142px 62px 20px 18px; column-gap: 3px; padding-left: 10px; }
.g-font .r1 > svg:nth-of-type(1) { margin-left: 12px; } .g-font .r1 > svg:last-child { margin-left: 30px; }
.g-font .r2 { grid-template-columns: 32px 32px 30px 18px 8px 28px 18px 8px 28px 18px 38px 10px; padding-left: 9px; font-size: 16px; color: #333; }
.g-font .r2 i { font-family: "Liberation Serif", serif; font-size: 18px; }
.g-align .r1 { grid-template-columns: 32px 32px 32px 2px 34px 10px; padding-left: 9px; }
.g-align .r2 { grid-template-columns: 32px 32px 32px 2px 34px 32px; padding-left: 9px; }
.up { margin-top: -10px; }
.pressed { width: 31px; height: 30px; border: 1px solid #777; border-radius: 5px; background: #ececec; display: grid; place-items: center; padding-top: 5px; }
.abtext { font-size: 12px; fill: #444; }
.wrapmerge { margin: 12px 0 0 4px; padding-left: 12px; border-left: 1px solid #c8c8c8; height: 78px; display: flex; flex-direction: column; gap: 8px; font-size: 14.200px; }
.wrapmerge > div { display: flex; align-items: center; height: 33px; gap: 6px; }
.wrapmerge .gap { margin-left: 16px; }
.g-num .r1 { padding: 0 10px; grid-template-columns: 180px; }
.g-num .r2 { grid-template-columns: 30px 18px 38px 26px 8px 28px 34px; padding-left: 9px; }
.sym { font-size: 19px; color: #333; }
.pct { font-size: 22px; letter-spacing: 0; }
.dec { font-size: 10.500px; letter-spacing: -.6px; fill: #444; }
.bigs { display: grid; padding-top: 9px; }
.bigs .big > svg:first-child { margin-bottom: 6px; }
.g-styles .bigs { grid-template-columns: 94px 76px 58px; padding-left: 8px; }
.g-cells .bigs { grid-template-columns: 56px 52px 56px; padding-left: 8px; }
.g-cells .big > span { margin: 2px 0 5px; } .g-cells .fmt > svg:first-child { margin: -3px 0 7px; }
.g-cells .fmt > span { margin: 0 0 6px; }
.g-edit .stack { width: 132px; margin-left: 14px; }
.g-edit .stack > div > svg:first-child { width: 20px; }
.g-edit .gap { margin-left: 18px; } .g-edit .near { margin-left: 0; }
.g-edit .big { width: 51px; padding-top: 9px; } .g-edit .big + .big { width: 64px; }
.g-edit .big > svg { height: 36px; margin-bottom: 6px; }
.g-edit .big span svg { height: 6px; margin: 0; }
.g-add .bigs { justify-items: center; }
.collapse { margin: 104px 0 0 18px; }

/* Formula bar */
.formula { margin: 10px 10px 0; height: 78px; display: grid; grid-template-columns: 127px 25px 91px 6px 1651px; }
.formula > div:not(.dots) { background: #fff; border: 1px solid #d6d6d6; border-radius: 5px; }
.namebox { height: 30px; display: flex; align-items: center; justify-content: space-between; padding: 0 6px; font-size: 15.500px; font-family: "Noto Sans", sans-serif; letter-spacing: -.4px; }
.dots { display: flex; flex-direction: column; gap: 3px; align-items: center; padding-top: 8px; }
.dots i { width: 3px; height: 3px; background: #444; }
.fx { height: 30px; display: flex; align-items: center; gap: 11px; padding-left: 7px; }
.fx em { font: italic bold 21px "Liberation Serif", serif; color: #333; margin-left: 2px; }
.input { grid-column: 5; display: flex; justify-content: space-between; padding: 3px 5px 0 12px; font-size: 15.500px; line-height: 22px; letter-spacing: .2px; }
.input svg { margin-top: 6px; }

/* Worksheet */
.workspace { margin-top: 8px; height: 635px; display: flex; gap: 2px; }
.sheet { width: 1895px; height: 635px; overflow: hidden; background: #fff; font-family: Lato, Carlito, sans-serif; font-size: 12.600px; color: #000; }
.row { display: grid; grid-template-rows: minmax(0, 1fr); grid-template-columns: 26px 57px 82px 70px 136px 60px 131px 470px 117px 82px 94px 94px 96px 97px 73px 73px 47px 73px 17px; height: 19px; }
.heads { height: 20px; background: #f0f0f0; border-bottom: 1px solid #aaa; }
.corner { background: linear-gradient(135deg, transparent 50%, #d5d5d5 50%) 10px 4px / 12px 12px no-repeat; border-right: 1px solid #ddd; }
.ch { border-right: 1px solid #cfcfcf; text-align: center; line-height: 21px; color: #444; font-family: "Open Sans", sans-serif; font-size: 12px; }
.ch.sel { background: #e0e0e0; color: #217346; border-bottom: 2px solid #217346; height: 20px; }
.rh { background: #f0f0f0; border-right: 1px solid #aaa; border-bottom: 1px solid #dcdcdc; text-align: center; color: #444; padding-right: 1px; line-height: 21px; font-size: 12.600px; }
.rh.sel { background: #e0e0e0; color: #217346; border-right: 2px solid #217346; }
.title { height: 34px; } .title .rh { line-height: 44px; }
.c { border-right: 1px solid #dedede; border-bottom: 1px solid #dedede; padding: 0 2px; line-height: 20px; white-space: nowrap; min-width: 0; position: relative; }
.name, .prod, .box { font-size: 13px; }
.name { letter-spacing: .44px; }
.prod { letter-spacing: .14px; } .prod.long { letter-spacing: .32px; }
.box { letter-spacing: .38px; }
.merged { grid-column: 2 / 19; text-align: center; font-size: 24px; font-weight: 700; line-height: 35px; }
.r { text-align: right; }
.red { background: red; border-color: red; }
.fields .c:not(:last-child) { background: #0070c0; border-color: #0070c0; color: #fff; font-weight: 700; font-size: 12.800px; letter-spacing: .42px; box-shadow: 0 -1px #0070c0; }
.fields .c.ind { padding-left: 7px; }
.money span { display: flex; justify-content: space-between; padding: 0 5px; }
.money i { font-style: normal; }
.cursor::before { content: ""; position: absolute; inset: -2px -2px -2px -1px; border: 2px solid #217346; z-index: 1; }
.cursor::after { content: ""; position: absolute; right: -3px; bottom: -3px; width: 5px; height: 5px; background: #217346; outline: 1px solid #fff; z-index: 2; }
.vscroll { width: 20px; height: 638px; border-radius: 10px; background: #f5f5f5; display: flex; flex-direction: column; align-items: center; padding: 6px 0; }
.vscroll i { width: 11px; height: 21px; border-radius: 6px; background: #666; margin: 6px 0 auto; }

/* Sheet tabs */
.tabs { height: 40px; display: grid; align-items: center; padding-left: 32px; grid-template-columns: 41px 68px 111px 6px 117px 6px 106px 6px 104px 53px 491px 35px 721px; }
.tabs hr { height: 20px; }
.tab { height: 30px; border-radius: 4px; font-size: 16.500px; text-align: center; line-height: 31px; color: #1a1a1a; letter-spacing: -.1px; }
.blue { background: #00b0f0; width: 106px; } .gray { background: #a5a5a5; width: 111px; }
.orange { background: #ed7d31; width: 99px; }
.current { align-self: start; height: 34px; width: 100px; border: 1px solid #fff; background: linear-gradient(#fff, #c6e0b4); font-size: 16px; }
.current b { display: inline-block; font-weight: 600; border-bottom: 2px solid #107c41; height: 31px; line-height: 32px; letter-spacing: .15px; }
.tabs .dots { padding: 0; justify-self: start; margin-left: 13px; }
.hscroll { height: 21px; border-radius: 11px; background: #f5f5f5; display: flex; align-items: center; padding: 0 6px; }
.hscroll i { height: 11px; width: 452px; border-radius: 6px; background: #666; margin: 0 auto 0 6px; }

/* Status bar */
.status { height: 27px; background: #f4f4f4; border-top: 1px solid #fff; display: grid; align-items: center; padding-left: 14px; grid-template-columns: 62px 22px 1449px 50px 50px 57px 173px 40px; font-size: 12.400px; letter-spacing: -.2px; }
.status b { font-weight: 600; font-size: 12.800px; letter-spacing: .1px; }
.view { width: 50px; height: 26px; display: grid; place-items: center; }
.on { background: #dcdcdc; }

/* Taskbar */
.taskbar { height: 60px; background: #000; color: #fff; display: grid; align-items: center; padding-left: 26px; grid-template-columns: 39px 548px 46px 290px 56px 54px 54px 56px 55px 46px 386px 30px 40px 30px 30px 28px 81px; font-size: 14.200px; }
.weather, .clock { display: flex; flex-direction: column; line-height: 20.500px; letter-spacing: -.15px; }
.dim { color: #b5b5b5; }
.badge { font-size: 13px; text-anchor: middle; fill: #222; }
.tsearch { width: 275px; height: 40px; border-radius: 20px; background: #242424; border: 1px solid #3c3c3c; display: flex; align-items: center; padding-left: 14px; gap: 11px; font-size: 15.500px; color: #ccc; }
.tsearch svg:last-child { margin-left: auto; margin-right: 5px; }
.running { width: 48px; height: 50px; border-radius: 6px; background: #161616; display: flex; flex-direction: column; align-items: center; justify-content: space-between; padding-top: 11px; }
.running i { width: 20px; height: 4px; border-radius: 2px; background: #4cc2ff; margin-bottom: 1px; }
.clock { text-align: right; }

.activate { position: absolute; left: 1554px; top: 914px; color: #9a9a9a; opacity: .75; }
.activate p { margin: 0; font-size: 24px; line-height: 34px; letter-spacing: 0; }
.activate small { display: block; font-size: 17px; line-height: 26px; letter-spacing: .15px; }
```
